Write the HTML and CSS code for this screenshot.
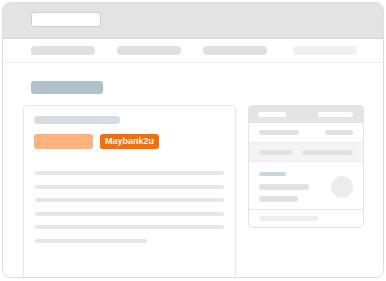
FILE: index.html
```html
<!DOCTYPE html>
<html lang="en">

<head>
    <meta charset="UTF-8">
    <meta name="viewport" content="width=device-width, initial-scale=1.0">
    <title>Checkout preview</title>
    <link rel="stylesheet" href="styles.css">
</head>

<body>
    <div class="window">
        <!-- Browser chrome -->
        <header class="chrome">
            <div class="address"></div>
        </header>

        <nav class="nav">
            <span class="nav-pill"></span>
            <span class="nav-pill"></span>
            <span class="nav-pill"></span>
            <span class="nav-pill faint"></span>
        </nav>

        <main class="content">
            <div class="page-title"></div>

            <div class="columns">
                <section class="main-card">
                    <div class="card-heading"></div>
                    <div class="methods">
                        <span class="method light"></span>
                        <span class="method active">Maybank2u</span>
                    </div>
                    <div class="lines">
                        <span class="line"></span>
                        <span class="line"></span>
                        <span class="line"></span>
                        <span class="line"></span>
                        <span class="line"></span>
                        <span class="line short"></span>
                    </div>
                </section>

                <aside class="summary">
                    <div class="sum-row sum-head">
                        <span class="bar white w28"></span>
                        <span class="bar white w35"></span>
                    </div>
                    <div class="sum-row">
                        <span class="bar w40"></span>
                        <span class="bar w28"></span>
                    </div>
                    <div class="sum-row shaded">
                        <span class="bar w33"></span>
                        <span class="bar w51"></span>
                    </div>
                    <div class="sum-item">
                        <div class="item-text">
                            <span class="bar blue w27"></span>
                            <span class="bar tall w50"></span>
                            <span class="bar tall w39"></span>
                        </div>
                        <span class="thumb"></span>
                    </div>
                    <div class="sum-foot">
                        <span class="bar faint w59"></span>
                    </div>
                </aside>
            </div>
        </main>
    </div>
</body>
</html>
```

FILE: styles.css
```css
* {
    margin: 0;
    padding: 0;
    box-sizing: border-box;
    font-family: "Liberation Sans", Arial, sans-serif;
}

body {
    background-color: #ffffff;
    width: 386px;
    height: 281px;
    overflow: hidden;
}

.window {
    margin: 2px;
    width: 382px;
    height: 276px;
    border: 1px solid #dcdfe2;
    border-radius: 8px;
    overflow: hidden;
    background-color: #ffffff;
}

.chrome {
    height: 36px;
    background-color: #e3e3e3;
    border-bottom: 1px solid #d6d6d6;
    padding: 9px 0 0 28px;
}

.address {
    width: 70px;
    height: 15px;
    background-color: #ffffff;
    border: 1px solid #cfcfcf;
    border-radius: 3px;
}

.nav {
    display: flex;
    height: 24px;
    padding: 7px 0 0 28px;
    border-bottom: 1px solid #ededed;
}

.nav-pill {
    width: 64px;
    height: 9px;
    background-color: #e0e0e0;
    border-radius: 4px;
    margin-right: 22px;
}

.nav-pill.faint {
    background-color: #f0f0f0;
    margin-left: 4px;
}

.content {
    padding: 18px 0 0 20px;
}

.page-title {
    width: 72px;
    height: 13px;
    margin-left: 8px;
    background-color: #b0c1cc;
    border-radius: 3px;
}

.columns {
    display: flex;
    gap: 12px;
    margin-top: 11px;
}

.main-card {
    width: 213px;
    height: 200px;
    border: 1px solid #e6e6e6;
    border-radius: 4px;
    padding: 10px;
}

.card-heading {
    width: 86px;
    height: 8px;
    background-color: #d6dde2;
    border-radius: 4px;
}

.methods {
    display: flex;
    gap: 7px;
    margin-top: 10px;
}

.method {
    width: 59px;
    height: 15px;
    border-radius: 3px;
}

.method.light {
    background-color: #ffb27c;
}

.method.active {
    background-color: #ff6b00;
    color: #ffffff;
    font-size: 9px;
    font-weight: bold;
    line-height: 15px;
    text-align: center;
}

.lines {
    display: flex;
    flex-direction: column;
    gap: 9.6px;
    margin-top: 22px;
    padding-left: 1px;
}

.line {
    width: 189px;
    height: 4px;
    background-color: #e6e6e6;
    border-radius: 2px;
}

.line.short {
    width: 112px;
}

.summary {
    width: 116px;
    height: 123px;
    border: 1px solid #e4e4e4;
    border-radius: 4px;
    overflow: hidden;
}

.sum-row {
    display: flex;
    justify-content: space-between;
    align-items: center;
    height: 20px;
    padding: 0 10px;
    border-bottom: 1px solid #ececec;
}

.sum-head {
    height: 17px;
    background-color: #e4e4e4;
    border-bottom: none;
    padding-left: 9px;
}

.sum-row.shaded {
    height: 19px;
    background-color: #f4f4f4;
}

.bar {
    display: block;
    height: 5px;
    background-color: #e2e2e2;
    border-radius: 3px;
}

.bar.white { background-color: #ffffff; }
.bar.blue { height: 4px; background-color: #c9d6de; }
.bar.tall { height: 6px; }
.bar.faint { background-color: #eeeeee; }

.w27 { width: 27px; }
.w28 { width: 28px; }
.w33 { width: 33px; }
.w35 { width: 35px; }
.w39 { width: 39px; }
.w40 { width: 40px; }
.w50 { width: 50px; }
.w51 { width: 51px; }
.w59 { width: 59px; }

.sum-item {
    display: flex;
    justify-content: space-between;
    height: 48px;
    padding: 10px 10px 0 10px;
    border-bottom: 1px solid #e8e8e8;
}

.item-text {
    display: flex;
    flex-direction: column;
    gap: 6px;
}

.item-text .blue {
    margin-bottom: 2px;
}

.thumb {
    width: 22px;
    height: 22px;
    margin-top: 4px;
    border-radius: 50%;
    background-color: #ececec;
}

.sum-foot {
    padding: 6px 10px 0 10px;
}
```
